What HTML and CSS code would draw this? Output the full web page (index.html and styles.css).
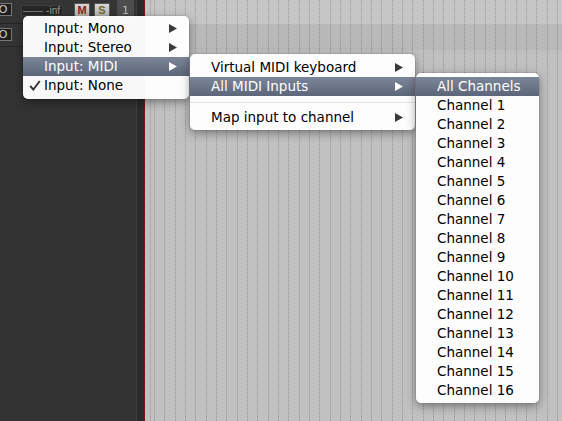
FILE: index.html
```html
<!DOCTYPE html>
<html lang="en">
<head>
    <meta charset="UTF-8">
    <meta name="viewport" content="width=device-width, initial-scale=1.0">
    <title>Track input menu</title>
    <link rel="stylesheet" href="styles.css">
</head>
<body>
    <div class="daw">
        <div class="tcp">
            <div class="track track-1">
                <span class="io">IO</span>
                <span class="meter"><span class="meter-line"></span>-inf</span>
                <span class="btn btn-m">M</span>
                <span class="btn btn-s">S</span>
                <span class="num">1</span>
            </div>
            <div class="track track-2">
                <span class="io">IO</span>
                <span class="meter"></span>
            </div>
        </div>
        <div class="splitter"></div>
        <div class="arrange">
            <div class="lane lane-1"></div>
            <div class="lane lane-2"></div>
        </div>
    </div>

    <div class="menu menu-input">
        <div class="item"><span class="mark"></span><span class="label">Input: Mono</span><svg class="sub" width="8" height="9" viewBox="0 0 8 9"><polygon points="0,0 8,4.5 0,9"/></svg></div>
        <div class="item"><span class="mark"></span><span class="label">Input: Stereo</span><svg class="sub" width="8" height="9" viewBox="0 0 8 9"><polygon points="0,0 8,4.5 0,9"/></svg></div>
        <div class="item active"><span class="mark"></span><span class="label">Input: MIDI</span><svg class="sub" width="8" height="9" viewBox="0 0 8 9"><polygon points="0,0 8,4.5 0,9"/></svg></div>
        <div class="item"><span class="mark"><svg width="12" height="11" viewBox="0 0 12 11"><path d="M1.2 5.8 L4.3 9.6 L10.8 1" /></svg></span><span class="label">Input: None</span></div>
    </div>

    <div class="menu menu-midi">
        <div class="item"><span class="mark"></span><span class="label">Virtual MIDI keyboard</span><svg class="sub" width="8" height="9" viewBox="0 0 8 9"><polygon points="0,0 8,4.5 0,9"/></svg></div>
        <div class="item active"><span class="mark"></span><span class="label">All MIDI Inputs</span><svg class="sub" width="8" height="9" viewBox="0 0 8 9"><polygon points="0,0 8,4.5 0,9"/></svg></div>
        <div class="separator"></div>
        <div class="item"><span class="mark"></span><span class="label">Map input to channel</span><svg class="sub" width="8" height="9" viewBox="0 0 8 9"><polygon points="0,0 8,4.5 0,9"/></svg></div>
    </div>

    <div class="menu menu-channels">
        <div class="item active"><span class="mark"></span><span class="label">All Channels</span></div>
        <div class="item"><span class="mark"></span><span class="label">Channel 1</span></div>
        <div class="item"><span class="mark"></span><span class="label">Channel 2</span></div>
        <div class="item"><span class="mark"></span><span class="label">Channel 3</span></div>
        <div class="item"><span class="mark"></span><span class="label">Channel 4</span></div>
        <div class="item"><span class="mark"></span><span class="label">Channel 5</span></div>
        <div class="item"><span class="mark"></span><span class="label">Channel 6</span></div>
        <div class="item"><span class="mark"></span><span class="label">Channel 7</span></div>
        <div class="item"><span class="mark"></span><span class="label">Channel 8</span></div>
        <div class="item"><span class="mark"></span><span class="label">Channel 9</span></div>
        <div class="item"><span class="mark"></span><span class="label">Channel 10</span></div>
        <div class="item"><span class="mark"></span><span class="label">Channel 11</span></div>
        <div class="item"><span class="mark"></span><span class="label">Channel 12</span></div>
        <div class="item"><span class="mark"></span><span class="label">Channel 13</span></div>
        <div class="item"><span class="mark"></span><span class="label">Channel 14</span></div>
        <div class="item"><span class="mark"></span><span class="label">Channel 15</span></div>
        <div class="item"><span class="mark"></span><span class="label">Channel 16</span></div>
    </div>
</body>
</html>
```

FILE: styles.css
```css
body {
    margin: 0;
    width: 562px;
    height: 421px;
    overflow: hidden;
    position: relative;
    background-color: #bfc0bf;
    font-family: "DejaVu Sans", "Liberation Sans", sans-serif;
}
.daw {
    display: flex;
    height: 421px;
}
.tcp {
    width: 136px;
    background-color: #333;
    overflow: hidden;
}
.track {
    display: flex;
    align-items: flex-start;
    background-color: #343434;
    border-bottom: 1px solid #262626;
}
.track-1 {
    height: 23px;
}
.track-2 {
    height: 22px;
}
.io {
    margin: 3px 0 0 -9px;
    width: 19px;
    height: 11px;
    line-height: 11px;
    border: 1px solid #777;
    background-color: #1f1f1f;
    color: #ddd;
    font-family: "Liberation Sans", sans-serif;
    font-size: 11px;
    text-align: center;
}
.track-2 .io {
    margin-top: 4px;
}
.meter {
    position: relative;
    margin: 5px 0 0 9px;
    width: 38px;
    height: 9px;
    line-height: 9px;
    background-color: #262626;
    border: 1px solid #3c3c3c;
    color: #999;
    font-family: "Liberation Sans", sans-serif;
    font-size: 10px;
    text-align: right;
    padding-right: 2px;
}
.track-2 .meter {
    margin-top: 4px;
}
.meter-line {
    position: absolute;
    left: 1px;
    top: 5px;
    width: 20px;
    height: 1px;
    background-color: #777;
}
.btn {
    margin-top: 3px;
    width: 14px;
    height: 12px;
    line-height: 12px;
    border: 1px solid #555;
    background: linear-gradient(#d6d6d6, #b4b4b4);
    font-family: "Liberation Sans", sans-serif;
    font-size: 11px;
    font-weight: bold;
    text-align: center;
}
.btn-m {
    margin-left: 11px;
    color: #8a1c1c;
}
.btn-s {
    margin-left: 4px;
    color: #6e6a1c;
}
.num {
    margin-left: 7px;
    width: 17px;
    height: 22px;
    line-height: 22px;
    background-color: #4d4d4d;
    color: #bbb;
    font-size: 11px;
    text-align: center;
}
.splitter {
    width: 7px;
    background-color: #2b2b2b;
    border-left: 1px solid #3f3f3f;
    border-right: 1px solid #7d1212;
}
.arrange {
    flex: 1;
    position: relative;
    background-color: #bfc0bf;
}
.arrange::after {
    content: "";
    position: absolute;
    inset: 0;
    background-image: repeating-linear-gradient(90deg, rgba(0, 0, 0, 0.22) 0 1px, transparent 1px 10.33px);
    background-position: 9px 0;
    -webkit-mask-image: repeating-linear-gradient(180deg, #000 0 1px, transparent 1px 2px);
    mask-image: repeating-linear-gradient(180deg, #000 0 1px, transparent 1px 2px);
}
.lane-1 {
    height: 24px;
    background-color: #c5c6c5;
}
.lane-2 {
    height: 26px;
    background-color: #b8b9b8;
}

/* popup menus */
.menu {
    position: absolute;
    background-color: rgba(255, 255, 255, 0.97);
    border-radius: 5px;
    box-shadow: 0 0 0 1px rgba(0, 0, 0, 0.06), 0 3px 10px rgba(0, 0, 0, 0.4);
    color: #000;
    font-size: 13.5px;
}
.menu-input {
    left: 23px;
    top: 16px;
    width: 166px;
    padding: 3px 0 4px;
}
.menu-midi {
    left: 190px;
    top: 54px;
    width: 225px;
    padding: 4px 0 3px;
}
.menu-channels {
    left: 416px;
    top: 73px;
    width: 123px;
    padding: 4px 0 3px;
}
.item {
    display: flex;
    align-items: center;
    height: 19px;
    line-height: 19px;
    white-space: nowrap;
}
.item.active {
    background: linear-gradient(#7c8698, #5c6678);
    color: #fff;
}
.mark {
    width: 21px;
    height: 19px;
    display: flex;
    align-items: center;
    padding-left: 6px;
    box-sizing: border-box;
}
.mark path {
    fill: none;
    stroke: #333;
    stroke-width: 1.9;
}
.label {
    flex: 1;
}
.sub {
    margin-right: 12px;
    fill: #3a3a3a;
}
.active .sub {
    fill: #fff;
}
.separator {
    height: 12px;
    display: flex;
    align-items: center;
}
.separator::before {
    content: "";
    flex: 1;
    height: 1px;
    margin-top: 1px;
    background-color: #e2e2e2;
}
```
